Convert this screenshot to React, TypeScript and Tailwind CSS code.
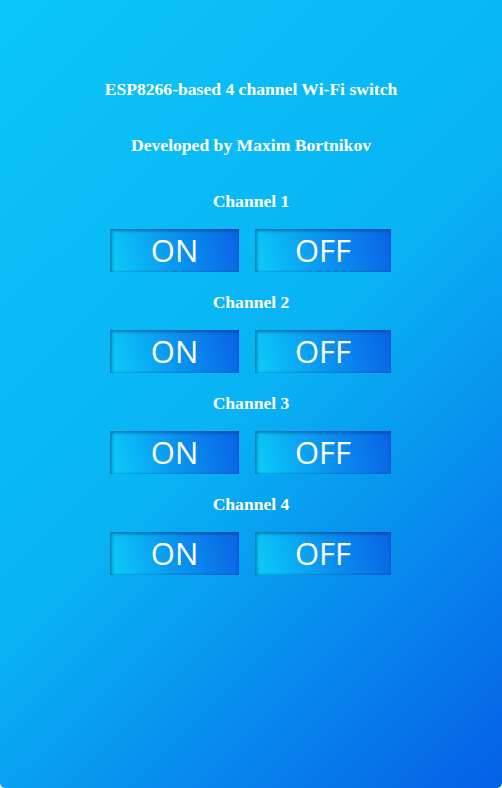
const channels = [1, 2, 3, 4];

function SwitchButton({ label, width }: { label: string; width: string }) {
  return (
    <button
      className={`${width} h-[43px] flex items-center justify-center text-white text-[31px] font-normal leading-none bg-[linear-gradient(75deg,#0bc8f8_5%,#0a9af0_45%,#0a62e6_100%)] shadow-[inset_2px_2px_3px_rgba(0,40,90,0.45),inset_-1px_-1px_2px_rgba(0,40,90,0.2)]`}
      style={{ fontFamily: '"Open Sans", "Noto Sans", sans-serif' }}
    >
      {label}
    </button>
  );
}

export default function App() {
  return (
    <div className="bg-white">
      <div
        className="w-[502px] h-[788px] rounded-b-[5px] bg-[linear-gradient(135deg,#0bc6f8_0%,#09b3f4_50%,#0560e6_100%)] flex flex-col items-center text-white font-bold"
        style={{ fontFamily: '"Liberation Serif", "Times New Roman", serif' }}
      >
        <h1 className="mt-[79px] h-5 leading-5 text-[17.6px]">ESP8266-based 4 channel Wi-Fi switch</h1>
        <h2 className="mt-9 h-5 leading-5 text-[17.6px]">Developed by Maxim Bortnikov</h2>
        <div className="mt-9 flex flex-col items-center">
          {channels.map((ch) => (
            <div key={ch} className="flex flex-col items-center mb-5">
              <h3 className="h-5 leading-5 text-[17.6px]">Channel {ch}</h3>
              <div className="mt-[18px] flex gap-4 -ml-px">
                <SwitchButton label="ON" width="w-[129px]" />
                <SwitchButton label="OFF" width="w-[136px]" />
              </div>
            </div>
          ))}
        </div>
      </div>
    </div>
  );
}
